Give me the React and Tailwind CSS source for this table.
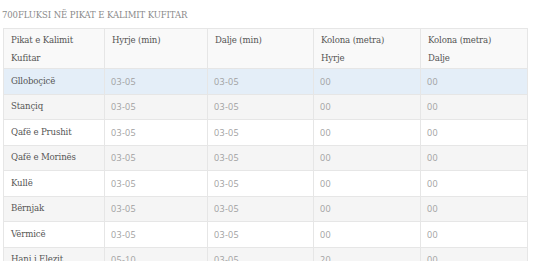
export default function App() {
  const rows = [
    ["Gllobo\u00e7ic\u00eb", "03-05", "03-05", "00", "00"],
    ["Stan\u00e7iq", "03-05", "03-05", "00", "00"],
    ["Qaf\u00eb e Prushit", "03-05", "03-05", "00", "00"],
    ["Qaf\u00eb e Morin\u00ebs", "03-05", "03-05", "00", "00"],
    ["Kull\u00eb", "03-05", "03-05", "00", "00"],
    ["B\u00ebrnjak", "03-05", "03-05", "00", "00"],
    ["V\u00ebrmic\u00eb", "03-05", "03-05", "00", "00"],
    ["Hani i Elezit", "05-10", "03-05", "20", "00"],
  ];

  return (
    <div className="h-[261px] overflow-hidden bg-white px-[3px] font-['DejaVu_Serif',serif]">
      {/* Title */}
      <h2 className="pt-[9px] -ml-[1px] h-[28px] text-[8.5px] leading-[12px] tracking-[-0.1px] text-[#8a8a8a] uppercase">
        700Fluksi n{"\u00eb"} pikat e kalimit kufitar
      </h2>

      {/* Table */}
      <table className="w-[524px] table-fixed border-collapse text-[8.6px] tracking-[-0.15px]">
        <colgroup>
          <col className="w-[101px]" />
          <col className="w-[103px]" />
          <col className="w-[106px]" />
          <col className="w-[107px]" />
          <col className="w-[107px]" />
        </colgroup>
        <thead>
          <tr className="h-[40px] bg-[#f9f9f9]">
            {["Pikat e Kalimit Kufitar", "Hyrje (min)", "Dalje (min)", "Kolona (metra) Hyrje", "Kolona (metra) Dalje"].map((h, i) => (
              <th
                key={i}
                className="border border-[#e6e6e6] px-[7px] pt-[2px] pb-0 align-top text-left font-normal leading-[18px] text-[#555]"
              >
                {h === "Pikat e Kalimit Kufitar" ? (
                  <>Pikat e Kalimit<br />Kufitar</>
                ) : h.startsWith("Kolona") ? (
                  <>Kolona (metra)<br />{h.split(" ").pop()}</>
                ) : (
                  h
                )}
              </th>
            ))}
          </tr>
        </thead>
        <tbody>
          {rows.map((r, i) => (
            <tr
              key={i}
              className={
                i === 0
                  ? "h-[25.5px] bg-[#e4eef8]"
                  : i % 2 === 1
                  ? "h-[25.5px] bg-[#f5f5f5]"
                  : "h-[25.5px] bg-white"
              }
            >
              <td className="border border-[#e6e6e6] px-[7px] text-[#555]">{r[0]}</td>
              {r.slice(1).map((c, j) => (
                <td
                  key={j}
                  className="border border-[#e6e6e6] px-[6px] font-['Open_Sans',sans-serif] text-[9px] tracking-[0.3px] text-[#a0a0a0]"
                >
                  {c}
                </td>
              ))}
            </tr>
          ))}
        </tbody>
      </table>
    </div>
  );
}
